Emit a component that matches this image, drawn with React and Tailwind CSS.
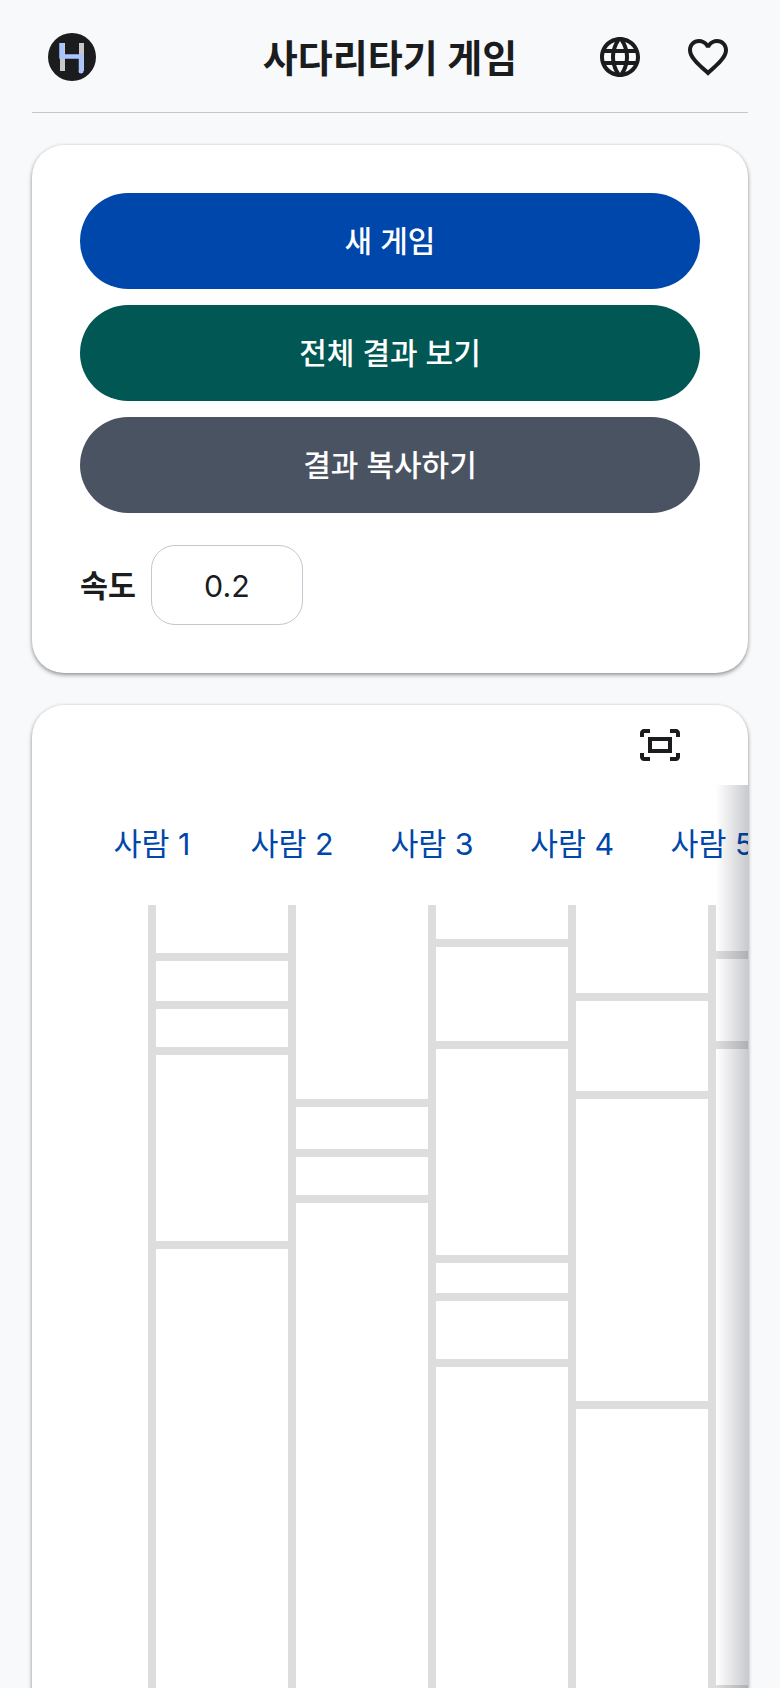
const LINES = [148, 288, 428, 568, 708];
const RUNGS = [
  [148, 953], [148, 1001], [148, 1047], [148, 1241],
  [288, 1099], [288, 1149], [288, 1195],
  [428, 939], [428, 1041], [428, 1255], [428, 1293], [428, 1359],
  [568, 993], [568, 1091], [568, 1401],
  [708, 951], [708, 1041], [708, 1685],
];
const TOP = 905;
const LEFT = 32;

function Icon({ d }) {
  return (
    <svg viewBox="0 0 24 24" className="w-12 h-12 shrink-0" fill="#1a1c1e">
      <path d={d} />
    </svg>
  );
}

const LANGUAGE = "M11.99 2C6.47 2 2 6.48 2 12s4.47 10 9.99 10C17.52 22 22 17.52 22 12S17.52 2 11.99 2zm6.93 6h-2.95c-.32-1.25-.78-2.45-1.38-3.56 1.84.63 3.37 1.91 4.33 3.56zM12 4.04c.83 1.2 1.48 2.53 1.91 3.96h-3.82c.43-1.43 1.08-2.76 1.91-3.96zM4.26 14C4.1 13.36 4 12.69 4 12s.1-1.36.26-2h3.38c-.08.66-.14 1.32-.14 2s.06 1.34.14 2H4.26zm.82 2h2.95c.32 1.25.78 2.45 1.38 3.56-1.84-.63-3.37-1.9-4.33-3.56zm2.95-8H5.08c.96-1.66 2.49-2.93 4.33-3.56C8.81 5.55 8.35 6.75 8.03 8zM12 19.96c-.83-1.2-1.48-2.53-1.91-3.96h3.82c-.43 1.43-1.08 2.76-1.91 3.96zM14.34 14H9.66c-.09-.66-.16-1.32-.16-2s.07-1.35.16-2h4.68c.09.65.16 1.32.16 2s-.07 1.34-.16 2zm.25 5.56c.6-1.11 1.06-2.31 1.38-3.56h2.95c-.96 1.65-2.49 2.93-4.33 3.56zM16.36 14c.08-.66.14-1.32.14-2s-.06-1.34-.14-2h3.38c.16.64.26 1.31.26 2s-.1 1.36-.26 2h-3.38z";
const HEART = "M16.5 3c-1.74 0-3.41.81-4.5 2.09C10.91 3.81 9.24 3 7.5 3 4.42 3 2 5.42 2 8.5c0 3.78 3.4 6.86 8.55 11.54L12 21.35l1.45-1.32C18.6 15.36 22 12.28 22 8.5 22 5.42 19.58 3 16.5 3zm-4.4 15.55l-.1.1-.1-.1C7.14 14.24 4 11.39 4 8.5 4 6.5 5.5 5 7.5 5c1.54 0 3.04.99 3.57 2.36h1.87C13.46 5.99 14.96 5 16.5 5c2 0 3.5 1.5 3.5 3.5 0 2.89-3.14 5.74-7.9 10.05z";
const FIT = "M17 4h3c1.1 0 2 .9 2 2v2h-2V6h-3V4zM4 8V6h3V4H4c-1.1 0-2 .9-2 2v2h2zm16 8v2h-3v2h3c1.1 0 2-.9 2-2v-2h-2zM7 18H4v-2H2v2c0 1.1.9 2 2 2h3v-2zM18 8H6v8h12V8zm-2 6H8v-4h8v4z";

function Logo() {
  return (
    <svg viewBox="0 0 48 48" className="w-12 h-12">
      <circle cx="24" cy="24" r="24" fill="#1a1c1e" />
      <rect x="12" y="10" width="5" height="28" fill="#c8c8c8" />
      <rect x="31" y="10" width="5" height="28" fill="#c8c8c8" />
      <path d="M13.5 10V23.5H33V36" fill="none" stroke="#a9c4ff" strokeWidth="4.5" />
      <circle cx="33" cy="38" r="2.5" fill="#a9c4ff" />
    </svg>
  );
}

function Pill({ bg, children }) {
  return (
    <button className={`h-24 w-full rounded-full text-white text-[30px] font-medium ${bg}`}>
      {children}
    </button>
  );
}

export default function App() {
  return (
    <div className="h-[1688px] overflow-hidden bg-[#f8f9fb] px-8 text-[#1a1c1e] font-['Inter','Noto_Sans_CJK_KR',sans-serif]">
      <header className="grid grid-cols-[1fr_auto_1fr] items-center py-8 px-4 border-b border-[#c4c6d0] h-[113px]">
        <div className="flex"><Logo /></div>
        <h1 className="text-[38px] leading-[48px] font-semibold pt-0.5">사다리타기 게임</h1>
        <div className="flex justify-end gap-10">
          <Icon d={LANGUAGE} />
          <Icon d={HEART} />
        </div>
      </header>

      <section className="mt-8 rounded-[32px] bg-white p-12 shadow-[0_2px_4px_rgba(0,0,0,0.4),0_0_3px_rgba(0,0,0,0.08)] flex flex-col gap-8">
        <div className="flex flex-col gap-4">
          <Pill bg="bg-[#0047ab]">새 게임</Pill>
          <Pill bg="bg-[#005753]">전체 결과 보기</Pill>
          <Pill bg="bg-[#4a5361]">결과 복사하기</Pill>
        </div>
        <div className="flex items-center gap-[15px]">
          <span className="text-[30.4px] font-bold pt-1">속도</span>
          <div className="w-[152px] h-20 rounded-3xl border border-[#c4c6d0] pt-1 flex items-center justify-center text-[30.4px]">0.2</div>
        </div>
      </section>

      <section className="mt-8 rounded-t-[32px] bg-white shadow-[0_2px_4px_rgba(0,0,0,0.4),0_0_3px_rgba(0,0,0,0.08)] overflow-hidden h-[1100px]">
        <div className="h-20 pt-4 pr-16 flex justify-end">
          <Icon d={FIT} />
        </div>
        <div className="relative overflow-hidden">
          <div className="flex h-[116px] mb-1 pt-1 pl-[50px] items-center overflow-hidden">
            {[1, 2, 3, 4, 5].map((n) => (
              <div key={n} className="w-[140px] shrink-0 text-center text-[30.4px] text-[#0047ab] whitespace-nowrap">사람 {n}</div>
            ))}
          </div>
          <svg width="716" height="800" className="block blur-[0.4px]">
            {LINES.map((x) => (
              <rect key={x} x={x - LEFT} y="0" width="8" height="800" fill="#dddddd" />
            ))}
            {RUNGS.map(([x, y]) => (
              <rect key={`${x}-${y}`} x={x - LEFT + 8} y={y - TOP} width="132" height="8" fill="#dddddd" />
            ))}
          </svg>
          <div className="absolute top-0 right-0 bottom-0 w-8 bg-gradient-to-r from-transparent to-[rgba(10,15,30,0.22)]" />
        </div>
      </section>
    </div>
  );
}
